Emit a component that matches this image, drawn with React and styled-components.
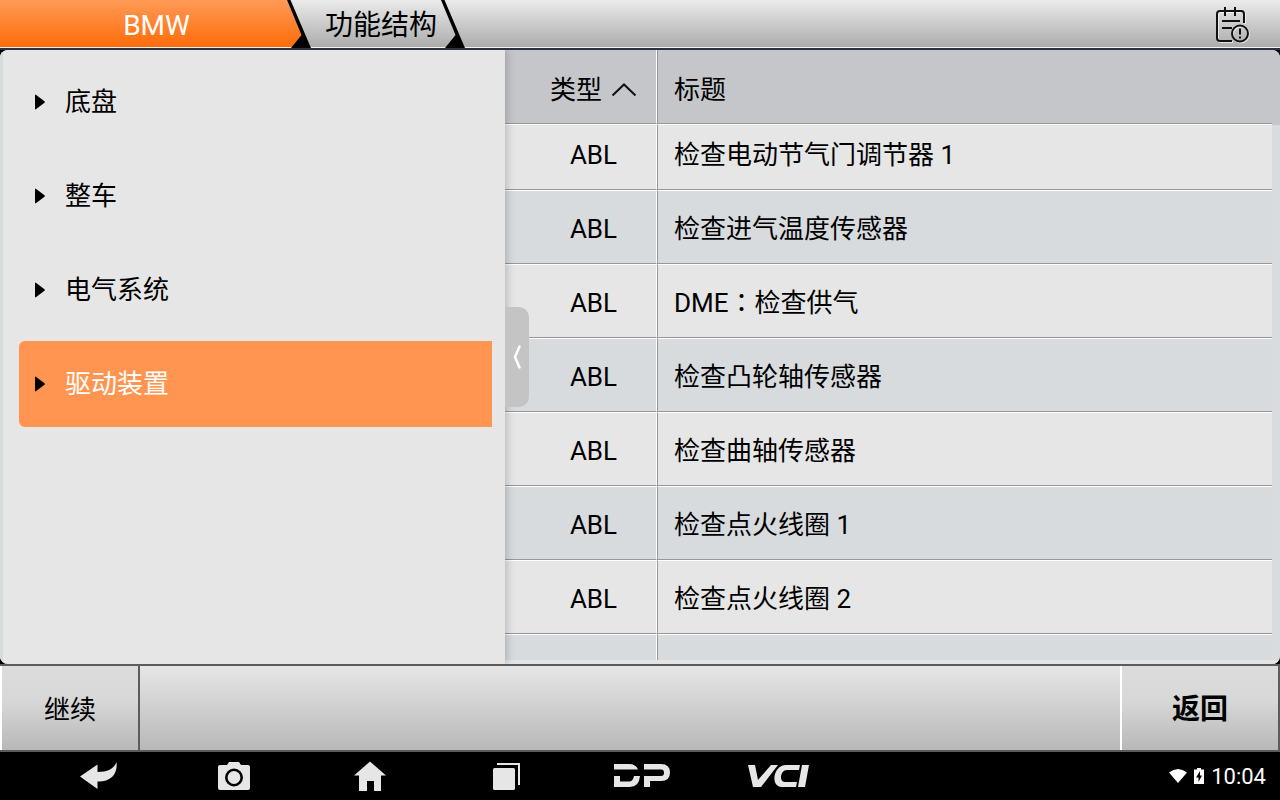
import React from "react";
import styled, { createGlobalStyle } from "styled-components";

const items = ["底盘", "整车", "电气系统", "驱动装置"];

const documents = [
    { type: "ABL", title: "检查电动节气门调节器 1" },
    { type: "ABL", title: "检查进气温度传感器" },
    { type: "ABL", system: "DME", title: "检查供气" },
    { type: "ABL", title: "检查凸轮轴传感器" },
    { type: "ABL", title: "检查曲轴传感器" },
    { type: "ABL", title: "检查点火线圈 1" },
    { type: "ABL", title: "检查点火线圈 2" },
    { type: "", title: "" },
];

const GlobalStyle = createGlobalStyle`
    * {
        box-sizing: border-box;
    }
    body {
        margin: 0;
        background: #000;
        color: #000;
        font-family: Roboto, "Noto Sans CJK SC", sans-serif;
        font-size: 26px;
        line-height: 36px;
    }
    button {
        border: 0;
        padding: 0;
        margin: 0;
        background: none;
        color: inherit;
        font: inherit;
        cursor: pointer;
    }
`;

const Screen = styled.div`
    display: flex;
    flex-direction: column;
    height: 100vh;
    overflow: hidden;
`;

const Header = styled.header`
    display: flex;
    justify-content: space-between;
    flex: none;
    height: 50px;
    background: linear-gradient(#ebebeb, #acacac 47px);
    border-bottom: 2px solid #2c3040;
    box-shadow: inset 0 -1px #f2f2f2;
`;

const Tabs = styled.nav`
    display: flex;
`;

const Tab = styled.button`
    height: 47px;
    padding: ${(props) => (props.$active ? "4px 0 0 26px" : "4px 4px 0 14px")};
    width: ${(props) => (props.$active ? "287px" : "auto")};
    background: ${(props) => (props.$active ? "linear-gradient(#ff9a57, #ff6c09)" : "none")};
    color: ${(props) => (props.$active ? "#fff" : "#000")};
    font-size: 28px;
    line-height: 43px;
    text-align: center;
`;

const Divider = styled.svg`
    display: block;
    width: 24px;
    height: 48px;
`;

const LogButton = styled.button`
    display: flex;
    align-items: center;
    height: 48px;
    padding: 2px 30px 0 0;
`;

const Main = styled.main`
    position: relative;
    display: flex;
    flex: 1;
    min-height: 0;
    border-radius: 8px;
    overflow: hidden;
    background: #d8dcdf;
`;

const Side = styled.aside`
    flex: none;
    width: 505px;
    border-left: 3px solid #d6dbde;
    background: #e6e6e6;
    box-shadow: 2px 0 8px rgba(0, 0, 0, 0.2);
    z-index: 1;
`;

const Tree = styled.ul`
    display: grid;
    gap: 8px;
    margin: 0;
    padding: 9px 13px 0 16px;
    list-style: none;
`;

const TreeButton = styled.button`
    display: flex;
    align-items: center;
    gap: 20px;
    width: 100%;
    height: 86px;
    padding-left: 16px;
    border-radius: 6px 0 0 6px;
    background: ${(props) => (props.$selected ? "#ff9550" : "none")};
    color: ${(props) => (props.$selected ? "#fff" : "#000")};
    text-align: left;
`;

const Content = styled.section`
    flex: 1;
    min-width: 0;
    padding: 0 8px 4px 0;
    background: linear-gradient(#c5c6ca 75px, #d8dcdf 75px);
    box-shadow: inset 0 -4px #e2e4e5;
`;

const Scroller = styled.div`
    height: 100%;
    overflow: hidden;
`;

const Table = styled.table`
    width: 100%;
    table-layout: fixed;
    border-collapse: separate;
    border-spacing: 0;
`;

const HeadCell = styled.th`
    width: ${(props) => (props.$type ? "152px" : "auto")};
    height: 74px;
    padding: ${(props) => (props.$type ? "6px 0 0 26px" : "6px 0 0 16px")};
    border-bottom: 1px solid #96979a;
    border-right: ${(props) => (props.$type ? "1px solid #fff" : "0")};
    border-left: ${(props) => (props.$type ? "0" : "1px solid #96979a")};
    font-weight: 400;
    text-align: ${(props) => (props.$type ? "center" : "left")};
`;

const SortButton = styled.button`
    display: inline-flex;
    align-items: center;
    gap: 9px;
`;

const Row = styled.tr`
    height: ${(props) => (props.$clipped ? "66px" : "74px")};
    background: ${(props) => (props.$odd ? "#d7dbde" : "#e6e6e6")};
`;

const Cell = styled.td`
    padding: ${(props) => (props.$clipped ? "0 0 4px" : "4px 0 0")};
    padding-left: ${(props) => (props.$type ? "26px" : "16px")};
    border-top: 1px solid #fff;
    border-bottom: 1px solid #96979a;
    border-right: ${(props) => (props.$type ? "1px solid #fff" : "0")};
    border-left: ${(props) => (props.$type ? "0" : "1px solid #96979a")};
    text-align: ${(props) => (props.$type ? "center" : "left")};
    white-space: nowrap;
`;

/* the TC face centres the full-width colon */
const Colon = styled.span`
    font-family: "Noto Sans CJK TC", sans-serif;
    line-height: 1;
`;

/* sits over the table, on the edge of the side panel */
const Handle = styled.button`
    position: absolute;
    top: 257px;
    left: 505px;
    z-index: 2;
    display: flex;
    align-items: center;
    justify-content: center;
    width: 24px;
    height: 100px;
    border-radius: 0 10px 10px 0;
    background: #c4c4c4;
`;

const Footer = styled.footer`
    display: flex;
    justify-content: space-between;
    flex: none;
    height: 88px;
    border-top: 2px solid #5c5c5c;
    border-bottom: 2px solid #5c5c5c;
    background: linear-gradient(#e6e6e6, #b8b8b8);
`;

const Action = styled.button`
    width: ${(props) => (props.$wide ? "160px" : "140px")};
    padding-top: 4px;
    border-left: 2px solid #fff;
    border-right: 2px solid #5c5c5c;
    background: linear-gradient(#dcdcdc, #d8d8d8 40%, #b8b8b8);
    font-size: ${(props) => (props.$wide ? "28px" : "26px")};
    font-weight: ${(props) => (props.$wide ? 700 : 400)};
`;

const NavBar = styled.nav`
    display: flex;
    justify-content: space-between;
    flex: none;
    height: 48px;
    background: #000;
`;

const NavButtons = styled.div`
    display: flex;
    padding-left: 30px;
`;

const NavButton = styled.button`
    display: flex;
    align-items: center;
    justify-content: center;
    width: 136px;
    height: 48px;
`;

const Status = styled.div`
    display: flex;
    align-items: center;
    gap: 7px;
    padding-right: 14px;
    color: #fff;
    font-size: 22px;

    span {
        padding-top: 2px;
    }
`;

const TabDivider = () => (
    <Divider viewBox="0 0 24 48" aria-hidden="true">
        <path d="M0 0h3.500l20.500 48H4L14.500 35z" fill="#000" />
    </Divider>
);

const ActiveDivider = () => (
    <Divider viewBox="0 0 24 48" aria-hidden="true">
        <defs>
            <linearGradient id="orange" x1="0" y1="0" x2="0" y2="1">
                <stop offset="0" stopColor="#ff9a57" />
                <stop offset="1" stopColor="#ff6c09" />
            </linearGradient>
        </defs>
        <path d="M0 0L15 35 5 47H0z" fill="url(#orange)" />
        <path d="M0 0h3.500l20.500 48H4L14.500 35z" fill="#000" />
    </Divider>
);

const LogIcon = () => (
    <svg width="35" height="38" viewBox="0 0 35 38" fill="none" aria-hidden="true">
        <g stroke="#fff" strokeOpacity=".6" strokeWidth="2" transform="translate(1 1)">
            <path d="M17 35H5q-3 0-3-3V8q0-3 3-3h21q3 0 3 3v9" />
            <circle cx="25" cy="27.500" r="8" />
        </g>
        <g stroke="#111" strokeWidth="2">
            <path d="M17 35H5q-3 0-3-3V8q0-3 3-3h21q3 0 3 3v9M10 1v9M20 1v9M7 15h18M7 22h10" />
            <circle cx="25" cy="27.500" r="8" />
            <path d="M25 22.500v6M25 30.500v2" />
        </g>
    </svg>
);

const App = () => {
    return (
        <Screen>
            <GlobalStyle />
            <Header>
                <Tabs>
                    <Tab $active>BMW</Tab>
                    <ActiveDivider />
                    <Tab>功能结构</Tab>
                    <TabDivider />
                </Tabs>
                <LogButton aria-label="日志">
                    <LogIcon />
                </LogButton>
            </Header>
            <Main>
                <Side>
                    <Tree>
                        {items.map((item) => (
                            <li key={item}>
                                <TreeButton $selected={item === "驱动装置"}>
                                    <svg width="10" height="16" viewBox="0 0 10 16" aria-hidden="true">
                                        <path d="M0 1.500Q0 0 1.200 1L9.500 7.200Q10.200 8 9.500 8.800L1.200 15Q0 16 0 14.500z" />
                                    </svg>
                                    {item}
                                </TreeButton>
                            </li>
                        ))}
                    </Tree>
                </Side>
                <Content>
                    <Scroller>
                        <Table>
                            <thead>
                                <tr>
                                    <HeadCell $type>
                                        <SortButton>
                                            类型
                                            <svg width="26" height="14" viewBox="0 0 26 14" fill="none" aria-hidden="true">
                                                <path d="M1.500 12.500L13 1.500l11.500 11" stroke="#111" strokeWidth="2" />
                                            </svg>
                                        </SortButton>
                                    </HeadCell>
                                    <HeadCell>标题</HeadCell>
                                </tr>
                            </thead>
                            <tbody>
                                {documents.map((doc, i) => (
                                    <Row key={i} $odd={i % 2 === 1} $clipped={i === 0}>
                                        <Cell $type $clipped={i === 0}>{doc.type}</Cell>
                                        <Cell $clipped={i === 0}>
                                            {doc.system}
                                            {doc.system && <Colon>：</Colon>}
                                            {doc.title}
                                        </Cell>
                                    </Row>
                                ))}
                            </tbody>
                        </Table>
                    </Scroller>
                </Content>
                <Handle aria-label="收起">
                    <svg width="8" height="24" viewBox="0 0 8 24" fill="none" aria-hidden="true">
                        <path d="M6.500 1.500L2 12l4.500 10.500" stroke="#fff" strokeWidth="2.500" strokeLinecap="round" strokeLinejoin="round" />
                    </svg>
                </Handle>
            </Main>
            <Footer>
                <Action>继续</Action>
                <Action $wide>返回</Action>
            </Footer>
            <NavBar>
                <NavButtons>
                    <NavButton aria-label="后退">
                        <svg width="38" height="28" viewBox="0 0 38 28" fill="#e6e6e6" aria-hidden="true">
                            <path d="M1 14.500L18.500 2.500v7.500C28 10 35 7 37.500 0 39 13 31 20 18.500 19.500V27z" />
                        </svg>
                    </NavButton>
                    <NavButton aria-label="相机">
                        <svg width="32" height="28" viewBox="0 0 32 28" aria-hidden="true">
                            <path d="M2 3h7l2-3h10L23 3h7q2 0 2 2v21q0 2-2 2H2q-2 0-2-2V5q0-2 2-2z" fill="#e6e6e6" />
                            <circle cx="16" cy="15.500" r="7.700" fill="#e6e6e6" stroke="#000" strokeWidth="2.600" />
                        </svg>
                    </NavButton>
                    <NavButton aria-label="主页">
                        <svg width="32" height="30" viewBox="0 0 32 30" fill="#e6e6e6" aria-hidden="true">
                            <path d="M16 .500L32 14.500h-5V30h-7V20h-7v10H5V14.500H0z" />
                        </svg>
                    </NavButton>
                    <NavButton aria-label="最近任务">
                        <svg width="27" height="27" viewBox="0 0 27 27" fill="#e6e6e6" aria-hidden="true">
                            <rect y="5" width="22" height="22" rx="1.500" />
                            <path d="M4 0h23v22h-2V2H4z" />
                        </svg>
                    </NavButton>
                    <NavButton aria-label="DP">
                        <svg width="56" height="24" viewBox="0 0 56 24" fill="#e6e6e6" aria-hidden="true">
                            <path d="M0 0h15q7 0 9 5.500H0zM0 12h6v5.500h9q4 0 5-5.500h6q-1 11-10 11H0z" />
                            <path d="M30 0h17q9 0 9 8.500T47 17H36v6h-6V12h17q3 0 3-3.300t-3-3.200H30z" />
                        </svg>
                    </NavButton>
                    <NavButton aria-label="VCI">
                        <svg width="61" height="23" viewBox="0 0 61 23" fill="#e6e6e6" aria-hidden="true">
                            <path d="M0 0h7l3 15L23 0h7L13 22H5z" />
                            <path d="M38 0h14l-1 5H39c-7 0-8 12-2 12h12l-1 5H34C22 22 25 0 38 0zM54 0h7l-4 22h-7z" />
                        </svg>
                    </NavButton>
                </NavButtons>
                <Status>
                    <svg width="18" height="14" viewBox="0 0 18 14" fill="#fff" aria-hidden="true">
                        <path d="M0 3.500Q9-3.500 18 3.500L9 14z" />
                    </svg>
                    <svg width="10" height="16" viewBox="0 0 10 16" aria-hidden="true">
                        <path d="M0 1.500h3V0h4v1.500h3V16H0z" fill="#fff" />
                        <path d="M6 3L2 9.500h2.500V14L8 7.500H6z" fill="#000" />
                    </svg>
                    <span>10:04</span>
                </Status>
            </NavBar>
        </Screen>
    );
};

export default App;
